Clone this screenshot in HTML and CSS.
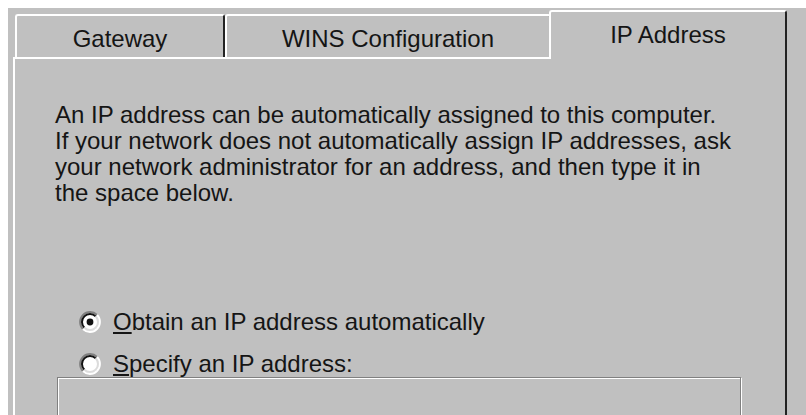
FILE: index.html
```html
<!DOCTYPE html>
<html lang="en">
<head>
<meta charset="utf-8">
<title>TCP/IP Properties - IP Address</title>
<link rel="stylesheet" href="styles.css">
</head>
<body>
<div class="dialog">
  <div class="tabs">
    <div class="tab tab-gateway">Gateway</div>
    <div class="tab tab-wins">WINS Configuration</div>
    <div class="tab tab-ip selected">IP Address</div>
  </div>
  <div class="panel">
    <p class="intro">An IP address can be automatically assigned to this computer.<br>If your network does not automatically assign IP addresses, ask<br>your network administrator for an address, and then type it in<br>the space below.</p>
    <div class="option option-auto">
      <svg class="radio" width="22" height="22" viewBox="0 0 22 22">
        <circle cx="11" cy="11" r="9" fill="#fff"/>
        <path d="M3.93 18.07 A10 10 0 0 1 18.07 3.93" fill="none" stroke="#808080" stroke-width="2"/>
        <path d="M18.07 3.93 A10 10 0 0 1 3.93 18.07" fill="none" stroke="#fff" stroke-width="2"/>
        <path d="M5.34 16.66 A8 8 0 0 1 16.66 5.34" fill="none" stroke="#111" stroke-width="2"/>
        <path d="M16.66 5.34 A8 8 0 0 1 5.34 16.66" fill="none" stroke="#dcdcdc" stroke-width="2"/>
        <circle cx="11" cy="11" r="3.4" fill="#111"/>
      </svg>
      <span class="label"><u>O</u>btain an IP address automatically</span>
    </div>
    <div class="groupbox">
      <div class="option legend">
        <svg class="radio" width="22" height="22" viewBox="0 0 22 22">
          <circle cx="11" cy="11" r="9" fill="#fff"/>
          <path d="M3.93 18.07 A10 10 0 0 1 18.07 3.93" fill="none" stroke="#808080" stroke-width="2"/>
          <path d="M18.07 3.93 A10 10 0 0 1 3.93 18.07" fill="none" stroke="#fff" stroke-width="2"/>
          <path d="M5.34 16.66 A8 8 0 0 1 16.66 5.34" fill="none" stroke="#111" stroke-width="2"/>
          <path d="M16.66 5.34 A8 8 0 0 1 5.34 16.66" fill="none" stroke="#dcdcdc" stroke-width="2"/>
        </svg>
        <span class="label"><u>S</u>pecify an IP address:</span>
      </div>
    </div>
  </div>
</div>
</body>
</html>
```
FILE: styles.css
```css
html, body {
  margin: 0;
  padding: 0;
  background: #ffffff;
  overflow: hidden;
}

.dialog {
  margin: 8px 0 0 8px;
  height: 407px;
  background: #c0c0c0;
  display: flex;
  flex-direction: column;
  font-family: "Liberation Sans", Arial, sans-serif;
  font-size: 24px;
  line-height: 26px;
  color: #151515;
}

.tabs {
  display: flex;
  align-items: flex-end;
  padding: 2px 0 0 7px;
}

.tab {
  box-sizing: border-box;
  height: 43px;
  padding-top: 10px;
  border-top: 2px solid #ffffff;
  border-left: 2px solid #ffffff;
  border-right: 2px solid #222222;
  border-radius: 3px 3px 0 0;
  text-align: center;
  white-space: nowrap;
  background: #c0c0c0;
}

.tab-gateway {
  width: 210px;
}

.tab-wins {
  width: 326px;
}

.tab.selected {
  width: 238px;
  height: 49px;
  margin-left: -2px;
  margin-bottom: -2px;
  position: relative;
  z-index: 1;
}

.panel {
  box-sizing: border-box;
  width: 774px;
  margin-left: 5px;
  flex: 1;
  border-top: 2px solid #ffffff;
  border-left: 2px solid #ffffff;
  border-right: 2px solid #222222;
  padding: 43px 0 0 40px;
}

.intro {
  margin: 0;
  white-space: nowrap;
}

.option {
  display: flex;
  align-items: center;
  gap: 12px;
  white-space: nowrap;
}

.option-auto {
  margin: 103px 0 0 24px;
}

.radio {
  flex: none;
  display: block;
}

.label u {
  text-decoration-thickness: 2px;
  text-underline-offset: 2px;
}

.groupbox {
  box-sizing: border-box;
  width: 684px;
  height: 80px;
  margin: 42px 0 0 2px;
  border: 1px solid #808080;
  box-shadow: inset 1px 1px 0 #ffffff, 1px 1px 0 #ffffff;
}

.legend {
  width: fit-content;
  margin: -27px 0 0 16px;
  padding: 0 5px;
  background: #c0c0c0;
}
```
